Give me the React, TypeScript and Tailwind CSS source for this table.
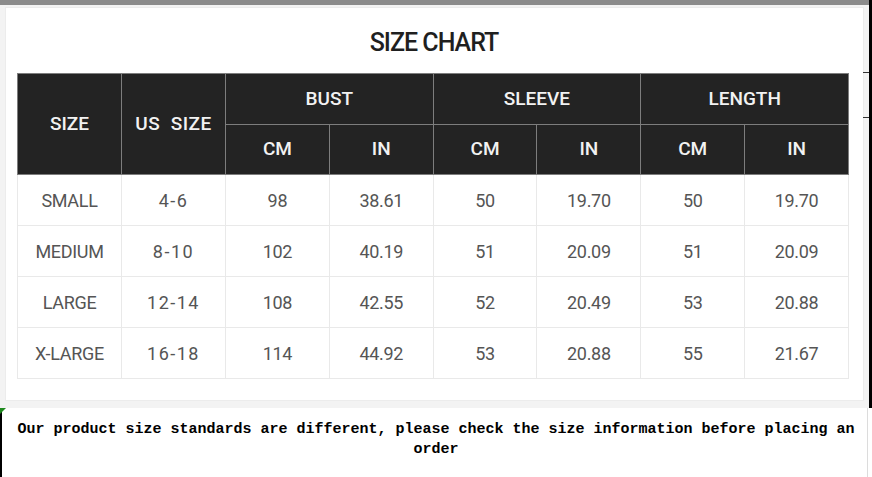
import React from 'react';

const rows = [
  ['SMALL', '4-6', '98', '38.61', '50', '19.70', '50', '19.70'],
  ['MEDIUM', '8-10', '102', '40.19', '51', '20.09', '51', '20.09'],
  ['LARGE', '12-14', '108', '42.55', '52', '20.49', '53', '20.88'],
  ['X-LARGE', '16-18', '114', '44.92', '53', '20.88', '55', '21.67'],
];

const head = 'bg-[#232323] text-[#f2f2f2] font-medium text-[19px] border border-[#7d7d7d] text-center';
const cell = 'h-[51px] w-[104px] border border-[#e9e9e9] text-center text-[18px] text-[#555]';

export default function App() {
  return (
    <div className="w-[872px] h-[477px] bg-white overflow-hidden relative" style={{ fontFamily: 'Roboto, "Liberation Sans", sans-serif' }}>
      <div className="flex">
        <div className="flex-1">
          <div className="h-[5px] bg-[#8b8b8b]" />
          <div className="h-[403px] bg-[#f3f3f3] pl-[5px] pr-[5px] pt-[2px] pb-[7px]">
            <div className="h-full bg-white border border-[#ececec] pl-[11px]">
              <h1 className="h-[65px] pt-[17px] text-center text-[25px] font-medium tracking-[-1px] text-[#1f1f1f] leading-[36px] pr-[12px]">
                SIZE CHART
              </h1>
              <table className="border-collapse table-fixed w-[832px]">
                <thead>
                  <tr className="h-[51px]">
                    <th rowSpan={2} className={`${head} w-[104px]`}>SIZE</th>
                    <th rowSpan={2} className={`${head} w-[104px] tracking-[0.5px]`}>US&nbsp;&nbsp;SIZE</th>
                    <th colSpan={2} className={head}>BUST</th>
                    <th colSpan={2} className={head}>SLEEVE</th>
                    <th colSpan={2} className={head}>LENGTH</th>
                  </tr>
                  <tr className="h-[50px]">
                    {['CM', 'IN', 'CM', 'IN', 'CM', 'IN'].map((t, i) => (
                      <th key={i} className={`${head} w-[104px]`}>{t}</th>
                    ))}
                  </tr>
                </thead>
                <tbody>
                  {rows.map((r) => (
                    <tr key={r[0]}>
                      {r.map((v, i) => (
                        <td key={i} className={i === 1 ? `${cell} tracking-[1.5px]` : `${cell} tracking-[-0.3px]`}>{v}</td>
                      ))}
                    </tr>
                  ))}
                </tbody>
              </table>
            </div>
          </div>
        </div>
        <div className="w-[3px] h-[408px] bg-black relative">
          <div className="absolute right-[3px] top-[72px] w-[6px] h-[1px] bg-[#333]" />
          <div className="absolute right-[3px] top-[117px] w-[6px] h-[1px] bg-[#333]" />
        </div>
      </div>
      <div className="flex h-[69px]">
        <div className="w-[2px] bg-black relative">
          <div className="absolute top-0 left-0 w-0 h-0 border-t-[6px] border-t-[#1f8a1f] border-r-[6px] border-r-transparent" />
        </div>
        <p
          className="flex-1 pt-[12px] pl-[3px] text-center text-[15px] leading-[20px] font-bold text-black border-r border-[#dcdcdc] mr-[4px]"
          style={{ fontFamily: '"Liberation Mono", monospace' }}
        >
          Our product size standards are different, please check the size information before placing an order
        </p>
      </div>
    </div>
  );
}
